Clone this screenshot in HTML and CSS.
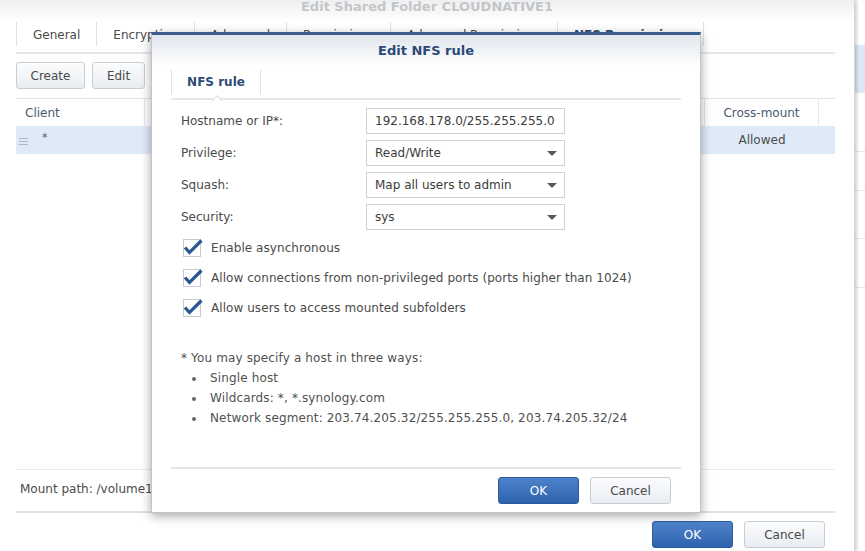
FILE: index.html
```html
<!DOCTYPE html>
<html lang="en">
<head>
<meta charset="utf-8">
<title>Edit NFS rule</title>
<link rel="stylesheet" href="styles.css">
</head>
<body>
<div class="desktop">
  <div class="window">
    <div class="win-title">Edit Shared Folder CLOUDNATIVE1</div>
    <div class="win-body">
      <div class="tabs">
        <div class="tab">General</div>
        <div class="tab">Encryption</div>
        <div class="tab">Advanced</div>
        <div class="tab">Permissions</div>
        <div class="tab">Advanced Permissions</div>
        <div class="tab active">NFS Permissions</div>
      </div>
      <div class="toolbar">
        <button class="btn w-create">Create</button>
        <button class="btn w-edit">Edit</button>
      </div>
      <div class="grid">
        <div class="grid-head">
          <div class="cell c-client">Client</div>
          <div class="cell c-mid"></div>
          <div class="cell c-mid"></div>
          <div class="cell c-cross">Cross-mount</div>
          <div class="cell c-end"></div>
        </div>
        <div class="grid-row">
          <div class="cell c-client"><svg class="handle" width="9" height="8" viewBox="0 0 9 8"><path d="M0 1.5h9M0 4.5h9M0 7.5h9" stroke="#b4b8bd" stroke-width="1"/></svg><span class="star">*</span></div>
          <div class="cell c-mid"></div>
          <div class="cell c-mid"></div>
          <div class="cell c-cross">Allowed</div>
          <div class="cell c-end"></div>
        </div>
      </div>
      <div class="spacer"></div>
      <div class="mount">Mount path: /volume1/CLOUDNATIVE1</div>
      <div class="win-footer">
        <button class="btn primary w-ok">OK</button>
        <button class="btn w-cancel">Cancel</button>
      </div>
    </div>
  </div>
  <div class="behind">
    <div class="behind-sel"></div>
    <div class="behind-line l1"></div>
    <div class="behind-line"></div>
    <div class="behind-line"></div>
    <div class="behind-line"></div>
  </div>

  <div class="dialog">
    <div class="dlg-head">Edit NFS rule</div>
    <div class="dlg-tabs">
      <div class="dlg-tab">NFS rule<span class="notch"></span></div>
    </div>
    <div class="dlg-body">
      <div class="form">
        <div class="frow">
          <label class="flabel">Hostname or IP*:</label>
          <div class="field">192.168.178.0/255.255.255.0</div>
        </div>
        <div class="frow">
          <label class="flabel">Privilege:</label>
          <div class="field select">Read/Write<span class="arrow"></span></div>
        </div>
        <div class="frow">
          <label class="flabel">Squash:</label>
          <div class="field select">Map all users to admin<span class="arrow"></span></div>
        </div>
        <div class="frow">
          <label class="flabel">Security:</label>
          <div class="field select">sys<span class="arrow"></span></div>
        </div>
      </div>
      <div class="checks">
        <div class="crow"><span class="cbox"><svg width="22" height="22" viewBox="0 0 22 22"><path d="M3 10.5 L7.5 15.5 L19.5 3.5" fill="none" stroke="#2c5892" stroke-width="3.2" stroke-linejoin="miter"/></svg></span>Enable asynchronous</div>
        <div class="crow"><span class="cbox"><svg width="22" height="22" viewBox="0 0 22 22"><path d="M3 10.5 L7.5 15.5 L19.5 3.5" fill="none" stroke="#2c5892" stroke-width="3.2" stroke-linejoin="miter"/></svg></span>Allow connections from non-privileged ports (ports higher than 1024)</div>
        <div class="crow"><span class="cbox"><svg width="22" height="22" viewBox="0 0 22 22"><path d="M3 10.5 L7.5 15.5 L19.5 3.5" fill="none" stroke="#2c5892" stroke-width="3.2" stroke-linejoin="miter"/></svg></span>Allow users to access mounted subfolders</div>
      </div>
      <div class="note">
        <div>* You may specify a host in three ways:</div>
        <ul>
          <li>Single host</li>
          <li>Wildcards: *, *.synology.com</li>
          <li>Network segment: 203.74.205.32/255.255.255.0, 203.74.205.32/24</li>
        </ul>
      </div>
    </div>
    <div class="dlg-footer">
      <button class="btn primary w-ok">OK</button>
      <button class="btn w-cancel">Cancel</button>
    </div>
  </div>
</div>
</body>
</html>
```

FILE: styles.css
```css
* { box-sizing: border-box; }
html, body { margin: 0; padding: 0; }
body {
  width: 865px;
  height: 551px;
  overflow: hidden;
  background: #ffffff;
  font-family: "DejaVu Sans", Verdana, sans-serif;
  font-size: 12px;
  color: #4a4a4a;
}
.desktop {
  position: relative;
  display: flex;
  width: 865px;
  height: 551px;
}

/* outer window */
.window {
  width: 855px;
  height: 551px;
  display: flex;
  flex-direction: column;
  background: #fff;
  border-right: 1px solid #d4d6d9;
  box-shadow: 2px 0 3px rgba(0,0,0,0.18);
  position: relative;
  z-index: 1;
}
.win-title {
  height: 20px;
  line-height: 14px;
  text-align: center;
  font-weight: bold;
  font-size: 13px;
  color: #c2c6cb;
  background: linear-gradient(#efefef, #fdfdfd);
}
.win-body {
  flex: 1;
  display: flex;
  flex-direction: column;
  padding: 0 19px 0 16px;
}
.tabs {
  display: flex;
  height: 34px;
  border-bottom: 2px solid #e4e6e8;
}
.tab {
  margin-top: 2px;
  height: 24px;
  line-height: 26px;
  padding: 0 16px;
  border-left: 1px solid #e0e3e6;
  color: #4a4a4a;
}
.tab.active {
  font-weight: bold;
  color: #2d4a77;
  border-right: 1px solid #e0e3e6;
}
.toolbar {
  display: flex;
  gap: 7px;
  padding-top: 8px;
  height: 44px;
}
.btn {
  font-family: "DejaVu Sans", Verdana, sans-serif;
  font-size: 12px;
  height: 27px;
  border-radius: 3px;
  border: 1px solid #c8ced6;
  background: linear-gradient(#fbfcfd, #e9edf2);
  color: #4a4a4a;
  padding: 0;
  cursor: pointer;
}
.btn.primary {
  border: 1px solid #2b5a9e;
  background: linear-gradient(#4e82cb, #2f62ac);
  color: #ffffff;
}
.w-create { width: 69px; }
.w-edit { width: 53px; }
.w-ok { width: 81px; }
.w-cancel { width: 81px; }

.grid {
  border-top: 1px solid #dde3ea;
}
.grid-head, .grid-row {
  display: grid;
  grid-template-columns: 129px 280px 280px 114px 1fr;
}
.grid-head { height: 27px; }
.grid-row { height: 28px; background: #dfeaf8; }
.cell {
  display: flex;
  align-items: center;
  color: #4a4a4a;
}
.grid-head .cell {
  color: #4b5970;
  border-right: 1px solid #e3e8ee;
}
.grid-head .c-end { border-right: none; }
.c-client { padding-left: 9px; }
.c-cross { justify-content: center; }
.handle { margin: 2px 0 0 -6px; }
.star { margin-left: 14px; margin-top: -6px; font-size: 11px; color: #555; }

.spacer { flex: 1; }
.mount {
  height: 44px;
  border-top: 1px solid #eaecef;
  border-bottom: 2px solid #dfe2e5;
  display: flex;
  align-items: center;
  padding-left: 4px;
  padding-bottom: 3px;
  color: #4a4a4a;
}
.win-footer {
  height: 38px;
  display: flex;
  justify-content: flex-end;
  gap: 11px;
  padding: 8px 10px 0 0;
}

/* background strip behind the window */
.behind {
  flex: 1;
  background: #fff;
  padding-top: 45px;
}
.behind-sel { height: 48px; background: #dde8f7; }
.behind-line { height: 1px; background: #e4e6e8; margin-top: 47px; }
.behind-line.l1 { margin-top: 58px; }
.behind-line + .behind-line { margin-top: 38px; }
.behind-line + .behind-line + .behind-line { margin-top: 47px; }
.behind-line + .behind-line + .behind-line + .behind-line { margin-top: 48px; }

/* modal dialog */
.dialog {
  position: absolute;
  left: 151px;
  top: 32px;
  width: 550px;
  height: 481px;
  z-index: 5;
  background: #fff;
  border: 1px solid #bfc4ca;
  border-top: 3px solid #3b5c8c;
  box-shadow: 0 3px 10px rgba(0,0,0,0.35);
  display: flex;
  flex-direction: column;
}
.dlg-head {
  height: 32px;
  line-height: 32px;
  text-align: center;
  font-weight: bold;
  font-size: 13px;
  color: #2b4a76;
  background: linear-gradient(#e1e6ed, #ffffff);
}
.dlg-tabs {
  margin: 0 19px;
  height: 33px;
  display: flex;
  border-bottom: 2px solid #e4e6e8;
}
.dlg-tab {
  position: relative;
  width: 90px;
  margin-top: 2px;
  height: 25px;
  display: flex;
  align-items: center;
  justify-content: center;
  border-left: 1px solid #dfe2e6;
  border-right: 1px solid #dfe2e6;
  font-weight: bold;
  color: #2d4a77;
}
.notch {
  position: absolute;
  left: 41px;
  bottom: -11px;
  width: 8px;
  height: 8px;
  background: #fff;
  border-left: 1px solid #dcdfe3;
  border-top: 1px solid #dcdfe3;
  transform: rotate(45deg);
}
.dlg-body {
  flex: 1;
  padding: 8px 19px 0 29px;
}
.form {
  display: flex;
  flex-direction: column;
  gap: 6px;
}
.frow {
  display: flex;
  align-items: center;
  height: 26px;
}
.flabel {
  width: 185px;
  color: #4a4a4a;
}
.field {
  position: relative;
  width: 199px;
  height: 26px;
  border: 1px solid #ccd1d7;
  padding-left: 8px;
  line-height: 24px;
  color: #3c3c3c;
  white-space: nowrap;
  overflow: hidden;
}
.arrow {
  position: absolute;
  right: 7px;
  top: 10px;
  width: 0;
  height: 0;
  border-left: 5px solid transparent;
  border-right: 5px solid transparent;
  border-top: 5px solid #555a60;
}
.checks {
  margin-top: 3px;
  padding-left: 2px;
}
.crow {
  height: 30px;
  display: flex;
  align-items: center;
  gap: 10px;
  color: #4a4a4a;
  letter-spacing: 0.06px;
}
.cbox {
  position: relative;
  width: 18px;
  height: 18px;
  border: 1px solid #c6cbd1;
  background: #fff;
  flex: none;
}
.cbox svg {
  position: absolute;
  left: -2px;
  top: -3px;
}
.note {
  margin-top: 25px;
  color: #505050;
  line-height: 20px;
  letter-spacing: 0.14px;
}
.note ul {
  margin: 0;
  padding: 0 0 0 29px;
  list-style: none;
}
.note li { position: relative; }
.note li::before {
  content: "";
  position: absolute;
  left: -18px;
  top: 9px;
  width: 4px;
  height: 4px;
  border-radius: 50%;
  background: #666;
}
.dlg-footer {
  margin: 0 19px;
  border-top: 2px solid #e4e6e8;
  height: 45px;
  display: flex;
  justify-content: flex-end;
  gap: 11px;
  padding: 8px 10px 0 0;
}
```
